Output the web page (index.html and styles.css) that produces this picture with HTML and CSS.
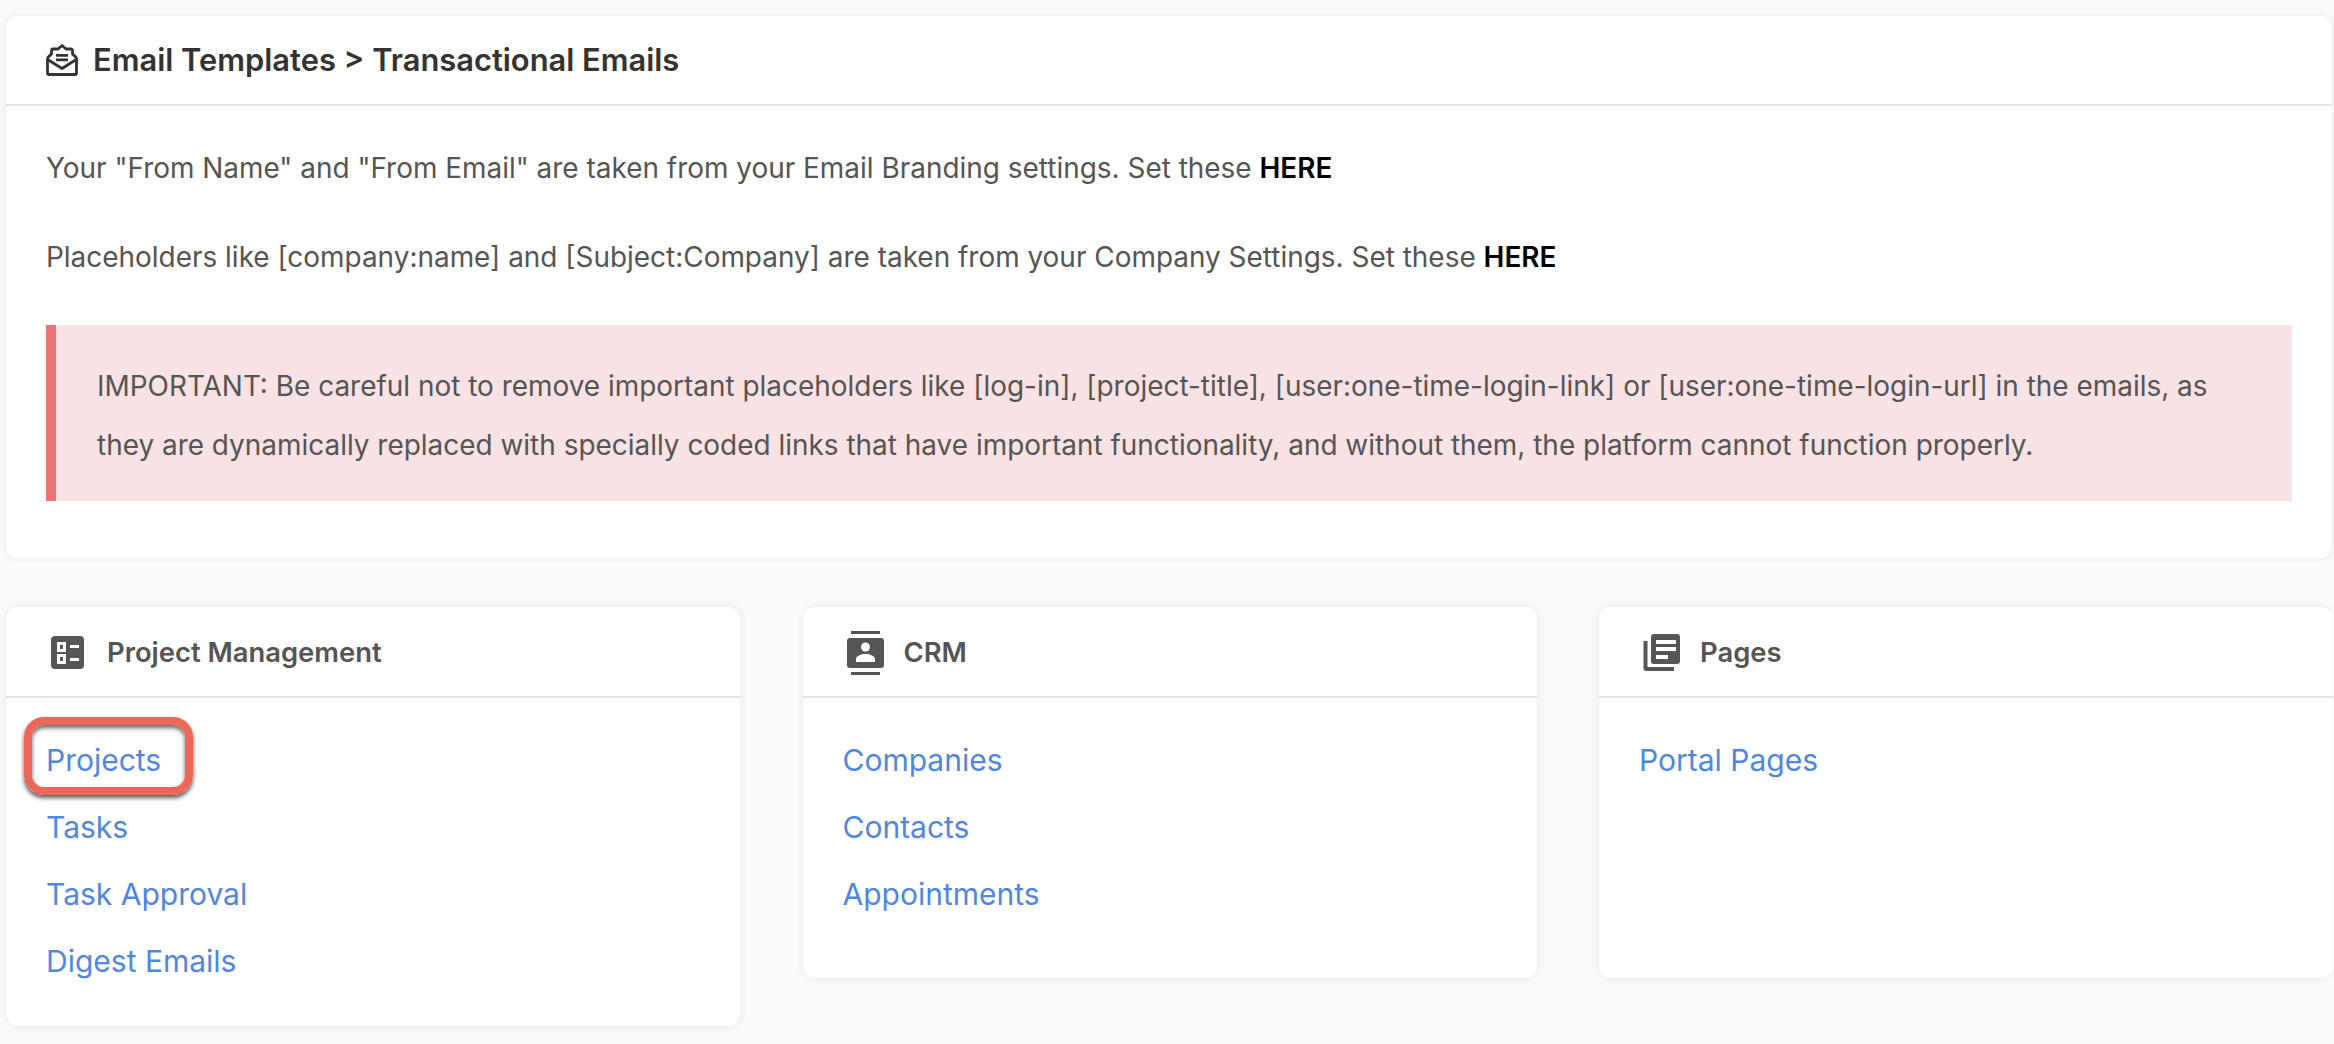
FILE: index.html
```html
<!DOCTYPE html>
<html lang="en">
<head>
<meta charset="utf-8">
<title>Email Templates</title>
<link rel="stylesheet" href="styles.css">
</head>
<body>
<main class="page">
  <section class="card main-card">
    <header class="card-head main-head">
      <svg class="icon-main" viewBox="0 0 32 32" aria-hidden="true"><path d="M1.500 15c0-1 .5-1.800 1.200-2.400L5.500 10V6.500A1.500 1.500 0 0 1 7 5h5L16 1.500 20 5h5a1.500 1.500 0 0 1 1.500 1.500V10l2.800 2.600c.7.600 1.200 1.400 1.200 2.400v14a1.500 1.500 0 0 1-1.500 1.500H3A1.500 1.500 0 0 1 1.500 29z" fill="none" stroke="#333" stroke-width="2.800" stroke-linejoin="round"/><path d="M2.500 16L16 24.500 29.500 16" fill="none" stroke="#333" stroke-width="2.800" stroke-linejoin="round"/><path d="M10 10h12v2.800H10zM10 14.500h12v2.800H10z" fill="#333"/></svg>
      <h1 class="main-title">Email Templates &gt; Transactional Emails</h1>
    </header>
    <div class="main-body">
      <p class="line">Your "From Name" and "From Email" are taken from your Email Branding settings. Set these <a class="here" href="#">HERE</a></p>
      <p class="line">Placeholders like [company:name] and [Subject:Company] are taken from your Company Settings. Set these <a class="here" href="#">HERE</a></p>
      <div class="alert">IMPORTANT: Be careful not to remove important placeholders like [log-in], [project-title], [user:one-time-login-link] or [user:one-time-login-url] in the emails, as they are dynamically replaced with specially coded links that have important functionality, and without them, the platform cannot function properly.</div>
    </div>
  </section>
  <div class="columns">
    <section class="card col-card">
      <header class="card-head col-head">
        <svg class="icon-col" viewBox="0 0 37 46" aria-hidden="true"><rect x="1" y="6" width="33" height="33" rx="4" fill="#555"/><path d="M7 12h9v10H7zM7 24h9v10H7z" fill="#fff"/><path d="M10 15h3v4h-3zM10 27h3v4h-3z" fill="#555"/><path d="M20 15h9v3h-9zM20 28h9v3h-9z" fill="#fff"/></svg>
        <h2 class="col-title">Project Management</h2>
      </header>
      <ul class="links">
        <li class="link-item"><a class="link" href="#">Projects</a><span class="callout"></span></li>
        <li class="link-item"><a class="link" href="#">Tasks</a></li>
        <li class="link-item"><a class="link" href="#">Task Approval</a></li>
        <li class="link-item"><a class="link" href="#">Digest Emails</a></li>
      </ul>
    </section>
    <section class="card col-card short">
      <header class="card-head col-head">
        <svg class="icon-col" viewBox="0 0 37 46" aria-hidden="true"><path d="M4 1h29v3H4zM4 42h29v3H4z" fill="#555"/><rect y="8" width="37" height="30" rx="3" fill="#555"/><circle cx="18.500" cy="17" r="4.500" fill="#fff"/><path d="M9 32v-3c0-3 5.500-5 9.500-5s9.500 2 9.500 5v3z" fill="#fff"/></svg>
        <h2 class="col-title">CRM</h2>
      </header>
      <ul class="links">
        <li class="link-item"><a class="link" href="#">Companies</a></li>
        <li class="link-item"><a class="link" href="#">Contacts</a></li>
        <li class="link-item"><a class="link" href="#">Appointments</a></li>
      </ul>
    </section>
    <section class="card col-card short">
      <header class="card-head col-head">
        <svg class="icon-col" viewBox="0 0 37 46" aria-hidden="true"><path d="M.5 11h4v26H31v4H3.500a3 3 0 0 1-3-3z" fill="#555"/><rect x="8" y="4" width="29" height="30" rx="3" fill="#555"/><path d="M13 10h20v4H13zM13 17h20v4H13zM13 25h12v4H13z" fill="#fff"/></svg>
        <h2 class="col-title">Pages</h2>
      </header>
      <ul class="links">
        <li class="link-item"><a class="link" href="#">Portal Pages</a></li>
      </ul>
    </section>
  </div>
</main>
</body>
</html>
```
FILE: styles.css
```css
* { box-sizing: border-box; }
html, body { margin: 0; height: 100%; }
body {
  background: #fafafa;
  font-family: Inter, "Liberation Sans", sans-serif;
  color: #555;
  overflow: hidden;
}
.page { padding: 16px 2px 0 6px; }
.card {
  background: #fff;
  border-radius: 12px;
  box-shadow: 0 0 8px rgba(0, 0, 0, 0.07);
}
.main-card { height: 542px; }
.card-head { display: flex; align-items: center; border-bottom: 2px solid #e4e4e4; }
.main-head { height: 90px; padding-left: 40px; gap: 15px; }
.icon-main { width: 32px; height: 32px; flex: none; }
.main-title { margin: 0; padding-bottom: 2px; font-size: 30.85px; font-weight: 600; color: #333; }
.main-body { padding: 41px 40px 0 40px; }
.line { margin: 0 0 47px; font-size: 27.95px; line-height: 42px; height: 42px; color: #555; }
.here { color: #000; font-weight: 600; text-decoration: none; }
.alert {
  height: 176px;
  padding: 32px 48px 0 41px;
  background: #f9e2e3;
  border-left: 10px solid #eb7576;
  font-size: 27.95px;
  line-height: 59px;
  color: #555;
}
.columns { display: grid; grid-template-columns: repeat(3, 734px); column-gap: 62.5px; align-items: start; margin-top: 49px; }
.col-head { height: 91px; padding: 3px 0 0 44px; gap: 20px; }
.icon-col { width: 37px; height: 46px; flex: none; }
.col-title { margin: 0; padding-bottom: 2px; font-size: 27.4px; font-weight: 600; color: #555; }
.links { list-style: none; margin: 0; padding: 29px 0 0 40px; height: 328px; }
.short .links { height: 280px; }
.link-item { position: relative; height: 67px; line-height: 67px; font-size: 30px; }
.link { color: #4f87e0; text-decoration: none; }
.callout {
  position: absolute;
  left: -22px;
  top: -10px;
  width: 169px;
  height: 78px;
  border: 8px solid #ec6757;
  border-radius: 20px;
  box-shadow: 0 3px 4px rgba(0, 0, 0, 0.65), inset 0 3px 4px rgba(0, 0, 0, 0.6);
  pointer-events: none;
}
```
